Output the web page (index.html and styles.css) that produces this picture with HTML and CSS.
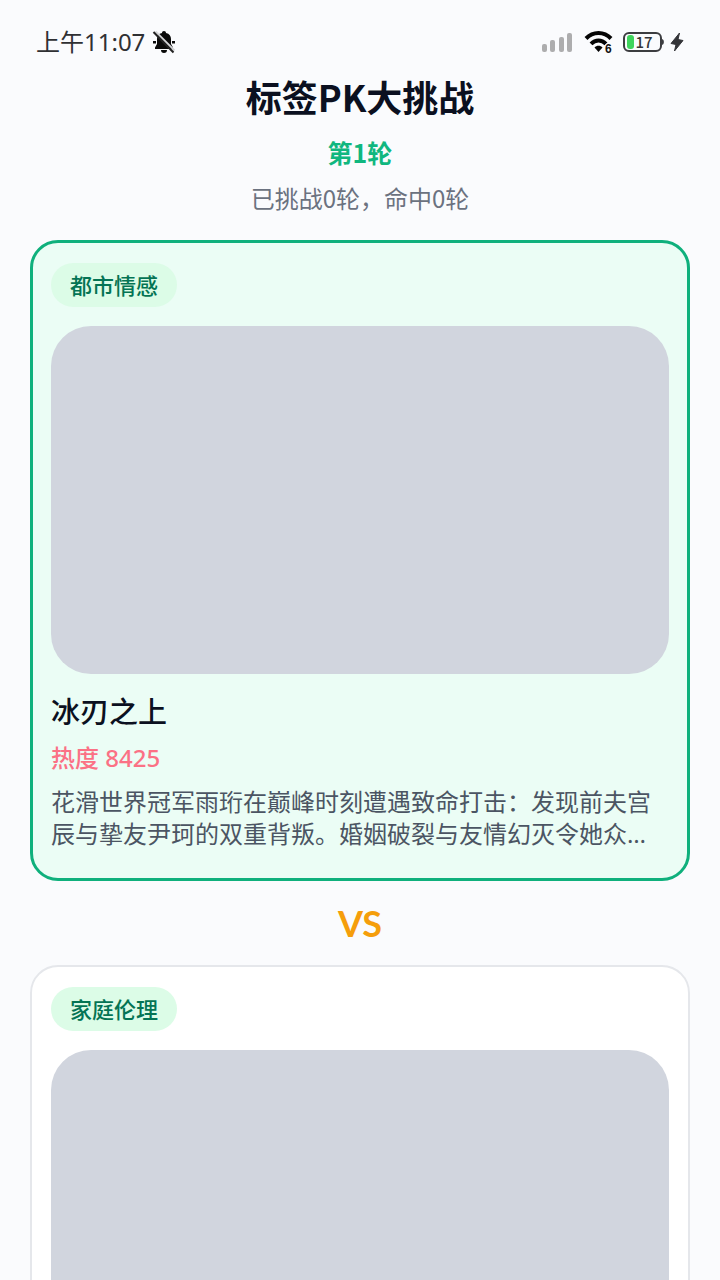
FILE: index.html
```html
<!DOCTYPE html>
<html lang="zh-CN">
  <head>
    <meta charset="UTF-8" />
    <meta name="viewport" content="width=device-width, initial-scale=1.0" />
    <title>标签PK大挑战</title>
    <link rel="stylesheet" href="styles.css">
  </head>
  <body class="body">
    <div class="status">
      <span class="status__time">上午11:07</span>
      <svg class="status__bell" width="24" height="24" viewBox="0 0 24 24">
        <path d="M12 1c1.300 0 2 .8 2 2 3.500.8 5 3 5 6v5l2 3.500v1.500h-18v-1.500l2-3.500V9c0-3 1.500-5.200 5-6 0-1.200.7-2 2-2z" fill="#0a0a0a" />
        <path d="M9 20h6c0 2-1 3-3 3s-3-1-3-3zM1 11h3v2.500H1zM20 11h3v2.500h-3z" fill="#0a0a0a" />
        <path d="M3.500 1.500l19 19" stroke="#d5d6d8" stroke-width="2" />
        <path d="M1.500 2l20 20.500" stroke="#222" stroke-width="2" />
      </svg>
      <div class="status__icons">
        <svg width="32" height="20" viewBox="0 0 32 20" fill="#adadae">
          <rect x="0" y="12" width="5" height="8" rx="2" />
          <rect x="8" y="8" width="5" height="12" rx="2" />
          <rect x="17" y="5" width="5" height="15" rx="2" />
          <rect x="25" y="1" width="5" height="19" rx="2" />
        </svg>
        <svg class="status__wifi" width="32" height="28" viewBox="0 0 32 28">
          <path d="M2 10.500C9 3.200 20 3.200 27 10.500" fill="none" stroke="#050505" stroke-width="4" />
          <path d="M7 15.800c4.500-4.500 10.500-4.500 15 0" fill="none" stroke="#050505" stroke-width="4" />
          <path d="M14.500 24l-4-4.500c2-2.500 6-2.500 8 0z" fill="#050505" />
          <text class="status__gen" x="21" y="25">6</text>
        </svg>
        <svg class="status__battery" width="42" height="22" viewBox="0 0 42 22">
          <rect x="1" y="2" width="37" height="18" rx="5" fill="none" stroke="#3c3d40" stroke-width="2" />
          <path d="M39 8c2.500.5 2.500 5.500 0 6z" fill="#3c3d40" />
          <rect x="4" y="4" width="7" height="14" rx="3" fill="#3fd45c" />
          <text class="status__percent" x="21" y="17">17</text>
        </svg>
        <svg width="14" height="20" viewBox="0 0 14 20">
          <path d="M9.500 1L1 11.500l5 1L4.500 19 13 8.500l-5-1z" fill="#333438" stroke="#333438" />
        </svg>
      </div>
    </div>

    <header class="header">
      <h1 class="title">标签PK大挑战</h1>
      <p class="round">第1轮</p>
      <p class="score">已挑战0轮，命中0轮</p>
    </header>

    <main class="battle">
      <article class="card card--selected">
        <span class="card__tag">都市情感</span>
        <div class="card__cover"></div>
        <h2 class="card__title">冰刃之上</h2>
        <p class="card__heat">热度 8425</p>
        <p class="card__text">花滑世界冠军雨珩在巅峰时刻遭遇致命打击：发现前夫宫辰与挚友尹珂的双重背叛。婚姻破裂与友情幻灭令她众…</p>
      </article>

      <div class="versus">VS</div>

      <article class="card">
        <span class="card__tag">家庭伦理</span>
        <div class="card__cover"></div>
      </article>
    </main>
  </body>
</html>
```

FILE: styles.css
```css
* {
  box-sizing: border-box;
}
.body {
  height: 100vh;
  margin: 0;
  overflow: hidden;
  background-color: #fafbfd;
  color: #0b1020;
  font-family: "Noto Sans CJK SC", sans-serif;
}
.status {
  display: flex;
  align-items: center;
  height: 70px;
  padding: 14px 36px 0;
}
.status__time {
  font-family: "Noto Sans", "Noto Sans CJK SC", sans-serif;
  font-size: 24px;
  line-height: 32px;
  color: #2f3033;
}
.status__bell {
  margin-left: 7px;
}
.status__icons {
  display: flex;
  align-items: center;
  margin-left: auto;
}
.status__wifi {
  margin-left: 10px;
}
.status__gen {
  font-family: "Liberation Sans", sans-serif;
  font-size: 12px;
  font-weight: 700;
  fill: #111;
  stroke: #fafbfd;
  stroke-width: 2px;
  paint-order: stroke;
}
.status__battery {
  margin-left: 7px;
  margin-right: 5px;
}
.status__percent {
  font-size: 15px;
  font-weight: 500;
  text-anchor: middle;
  fill: #333438;
}
.header {
  display: flex;
  flex-direction: column;
  align-items: center;
  padding-bottom: 26px;
}
.title {
  margin: 0;
  font-size: 36px;
  line-height: 52px;
  font-weight: 700;
}
.round {
  margin: 12px 0 0;
  font-size: 25px;
  line-height: 36px;
  font-weight: 700;
  color: #10b77f;
}
.score {
  margin: 12px 0 0;
  font-size: 24px;
  line-height: 32px;
  color: #6b7280;
}
.battle {
  padding: 0 30px;
}
.card {
  padding: 20px 19px;
  border: 2px solid #e5e7eb;
  border-radius: 28px;
  background-color: #fff;
}
.card--selected {
  padding: 20px 18px 28px;
  border: 3px solid #0fb07c;
  background-color: #ebfdf5;
}
.card__tag {
  display: block;
  width: fit-content;
  padding: 0 19px 2px;
  border-radius: 22px;
  background-color: #dcfce7;
  font-size: 22px;
  line-height: 42px;
  font-weight: 500;
  color: #047454;
}
.card__cover {
  margin-top: 19px;
  aspect-ratio: 16 / 9;
  border-radius: 40px;
  background-color: #d1d5de;
}
.card__title {
  margin: 16px 0 0;
  font-size: 29px;
  line-height: 40px;
  font-weight: 500;
}
.card__heat {
  margin: 12px 0 0;
  font-family: "Noto Sans", "Noto Sans CJK SC", sans-serif;
  font-size: 24px;
  line-height: 32px;
  font-weight: 500;
  color: #fb7185;
}
.card__text {
  margin: 12px 0 0;
  font-family: "Noto Sans", "Noto Sans CJK SC", sans-serif;
  font-size: 24px;
  line-height: 32px;
  color: #4b5563;
}
.versus {
  padding: 16px 0;
  font-family: Lato, sans-serif;
  font-size: 36px;
  line-height: 52px;
  font-weight: 700;
  text-align: center;
  color: #f59e0b;
}
```
